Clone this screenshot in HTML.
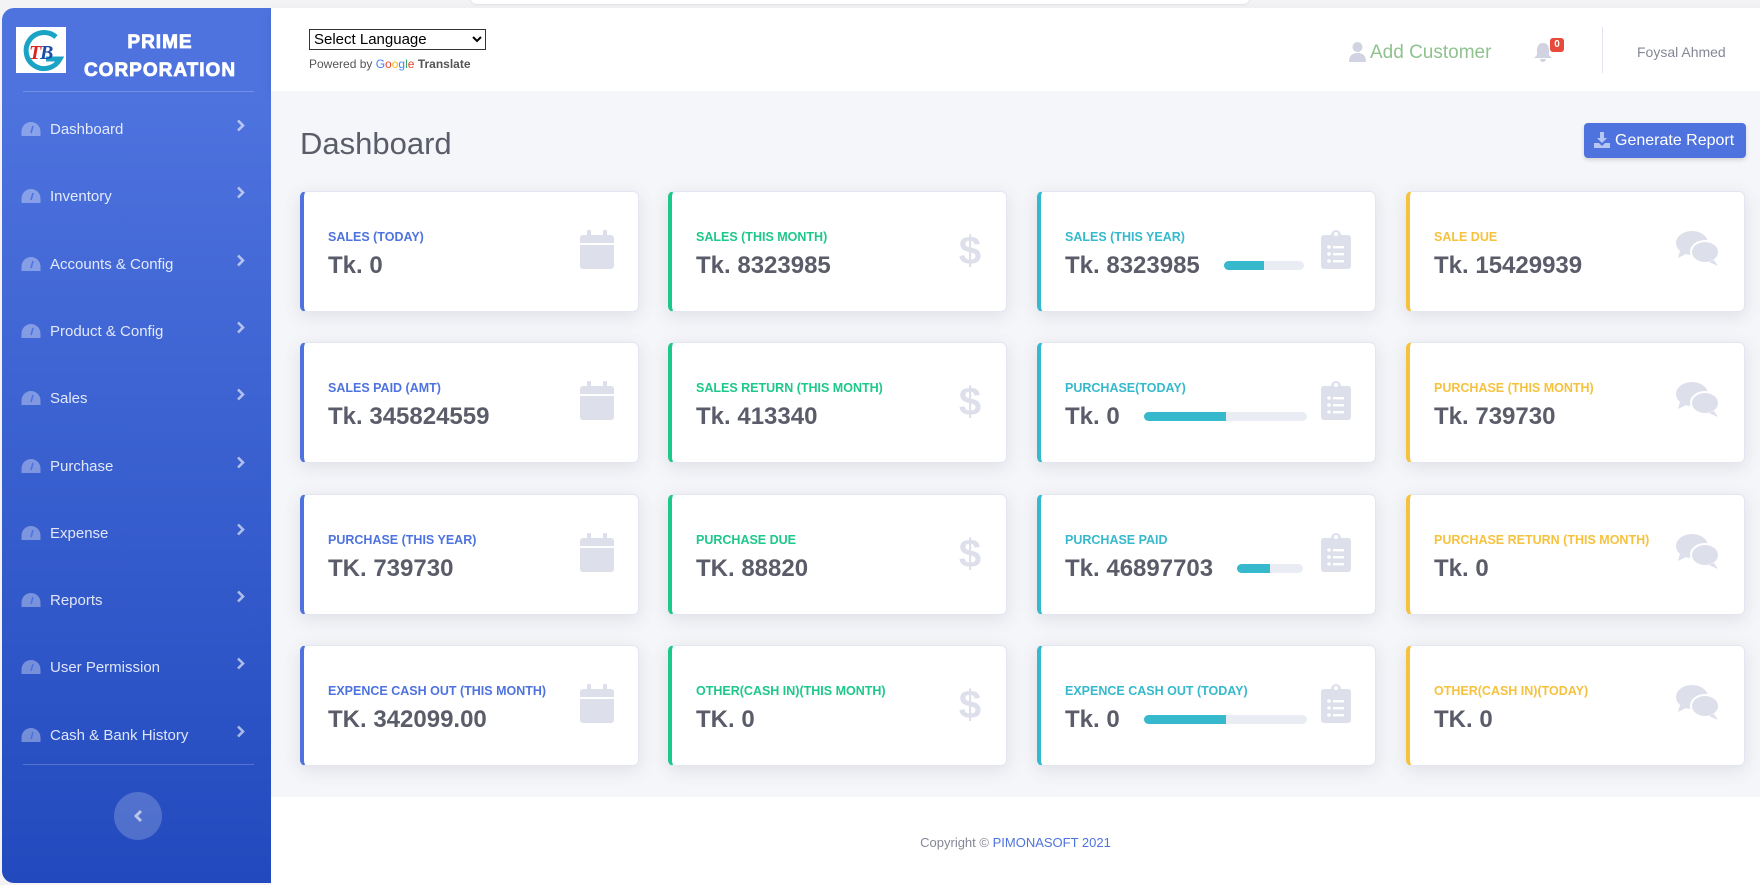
<!DOCTYPE html>
<html><head><meta charset="utf-8"><style>
*{box-sizing:border-box;margin:0;padding:0}
body{width:1760px;height:885px;overflow:hidden;background:#f3f3f5;font-family:"Liberation Sans",sans-serif;position:relative}
.topbar{position:absolute;left:470px;top:-10px;width:780px;height:14px;background:#fff;border-radius:8px;box-shadow:0 0 2px #ccc}
.side{position:absolute;left:2px;top:8px;width:269px;height:875px;background:linear-gradient(180deg,#4e73df 10%,#224abe 100%);border-radius:12px 0 0 12px}
.logo{position:absolute;left:14px;top:19px;width:50px;height:46px;background:#fff}
.brand{position:absolute;left:58px;top:21px;width:200px;text-align:center;color:#fff;font-weight:bold;font-size:19px;letter-spacing:1px;line-height:28px;-webkit-text-stroke:0.8px #fff}
.hr{position:absolute;left:21px;width:231px;height:1px;background:rgba(255,255,255,.2)}
.mi{position:absolute;left:0;width:269px;height:30px;color:rgba(255,255,255,.85);font-size:15px}
.mi svg.g{position:absolute;left:21px;top:7px}
.mi span{position:absolute;left:50px;top:7px}
.mi svg.ch{position:absolute;left:236px;top:5px}
.tog{position:absolute;left:112px;top:784px;width:48px;height:48px;border-radius:50%;background:rgba(255,255,255,.2)}
.hdr{position:absolute;left:271px;top:8px;width:1489px;height:83px;background:#fff;box-shadow:0 4px 10px rgba(58,59,69,.1)}
.main{position:absolute;left:271px;top:91px;width:1489px;height:706px;background:#f5f6fa}
.foot{position:absolute;left:271px;top:797px;width:1489px;height:88px;background:#fff;text-align:center;font-size:13px;color:#858796;padding-top:38px}
.card{position:absolute;width:339px;height:121px;background:#fff;border-radius:6px;border:1px solid #e3e6f0;box-shadow:0 4px 18px rgba(58,59,69,.12)}
.card .lab{position:absolute;left:24px;top:38px;font-size:12.5px;font-weight:bold;text-transform:uppercase}
.card .val{position:absolute;left:24px;top:60px;font-size:24px;font-weight:bold;color:#5a5c69}
.card .ic{position:absolute;right:24px;top:38px}
.bar{position:absolute;top:69px;height:9px;border-radius:5px;background:#eaecf4;overflow:hidden}
.bar i{display:block;height:100%;background:#36b9cc}
</style></head><body>
<div class="topbar"></div>
<div class="side">
 <div class="logo"><svg width="50" height="46" viewBox="0 0 50 46"><path d="M40 10 A18 18 0 1 0 44 32 L30 32" fill="none" stroke="#1ba3c6" stroke-width="5"/><text x="13" y="32" font-size="20" font-style="italic" font-weight="bold" fill="#d22" font-family="Liberation Serif,serif">T</text><text x="24" y="32" font-size="20" font-style="italic" font-weight="bold" fill="#1e4aa8" font-family="Liberation Serif,serif">B</text></svg></div>
 <div class="brand">PRIME<br>CORPORATION</div>
 <div class="hr" style="top:83px"></div>
 <div class="hr" style="top:756px"></div>
 <div class="tog"><svg style="position:absolute;left:19px;top:17px" width="10" height="14" viewBox="0 0 10 14"><path d="M8 2L3 7l5 5" fill="none" stroke="rgba(255,255,255,.6)" stroke-width="3"/></svg></div>
</div>
<div id="menu"></div>
<div class="hdr">
 <select style="position:absolute;left:38px;top:21px;width:177px;height:21px;font-size:15px;font-family:'Liberation Sans',sans-serif;border:1px solid #333;background:#fff"><option>Select Language</option></select>
 <div style="position:absolute;left:38px;top:49px;font-size:12px;color:#555">Powered by <b style="color:#4285f4;font-weight:normal">G</b><b style="color:#ea4335;font-weight:normal">o</b><b style="color:#fbbc05;font-weight:normal">o</b><b style="color:#4285f4;font-weight:normal">g</b><b style="color:#34a853;font-weight:normal">l</b><b style="color:#ea4335;font-weight:normal">e</b> <b style="color:#555">Translate</b></div>
 <svg style="position:absolute;left:1078px;top:34px" width="17" height="20" viewBox="0 0 17 20"><circle cx="8.5" cy="5" r="5" fill="#d1d3e2"/><path d="M0 20 Q0 11 8.5 11 Q17 11 17 20Z" fill="#d1d3e2"/></svg>
 <div style="position:absolute;left:1099px;top:34px;font-size:19px;color:#8fc28f">Add Customer</div>
 <svg style="position:absolute;left:1263px;top:34px" width="18" height="20" viewBox="0 0 18 20"><path d="M9 1 C4 1 3 5 3 9 L3 13 L0 16 L18 16 L15 13 L15 9 C15 5 14 1 9 1Z M6 17 a3 3 0 0 0 6 0Z" fill="#d1d3e2"/></svg>
 <div style="position:absolute;left:1279px;top:30px;width:14px;height:14px;background:#e74a3b;border-radius:3px;color:#fff;font-size:10px;font-weight:bold;text-align:center;line-height:14px">0</div>
 <div style="position:absolute;left:1331px;top:19px;width:1px;height:46px;background:#e3e6f0"></div>
 <div style="position:absolute;left:1366px;top:36px;font-size:14px;color:#858796">Foysal Ahmed</div>
</div>
<div class="main">
 <div style="position:absolute;left:29px;top:35px;font-size:31px;color:#5a5c69">Dashboard</div>
 <div style="position:absolute;left:1313px;top:32px;width:162px;height:35px;background:#4e73df;border-radius:4px;color:#fff;font-size:16px;line-height:35px;padding-left:31px;box-shadow:0 2px 4px rgba(0,0,0,.15)"><svg style="position:absolute;left:10px;top:9px" width="16" height="16" viewBox="0 0 16 16"><path d="M6 0h4v6h3l-5 5-5-5h3z M0 11h5l3 3 3-3h5v5H0z" fill="#b7c6f3"/></svg>Generate Report</div>
</div>
<div id="cards"></div>
<div class="foot">Copyright © <span style="color:#4e73df">PIMONASOFT 2021</span></div>
<script>
var m=["Dashboard","Inventory","Accounts &amp; Config","Product &amp; Config","Sales","Purchase","Expense","Reports","User Permission","Cash &amp; Bank History"],h="";
m.forEach(function(t,i){h+='<div class="mi" style="top:'+(114+i*67.3)+'px"><svg class="g" width="20" height="16" viewBox="0 0 20 16"><path d="M10 1A9.5 9.5 0 0 0 .5 10.5V15h19v-4.5A9.5 9.5 0 0 0 10 1z" fill="rgba(255,255,255,.35)"/><path d="M10 12 L12 5" stroke="#4e73df" stroke-width="1.6"/></svg><span>'+t+'</span><svg class="ch" width="9" height="13" viewBox="0 0 9 13"><path d="M2 1.5l5 5-5 5" fill="none" stroke="rgba(255,255,255,.6)" stroke-width="2.6"/></svg></div>'});
document.getElementById("menu").innerHTML=h;
var cols=[300,668,1037,1406],rows=[191,342,494,645],clr=["#4e73df","#1cc88a","#36b9cc","#f6c23e"];
var d=[["Sales (Today)","Tk. 0","Sales (This Month)","Tk. 8323985","Sales (This Year)","Tk. 8323985","Sale Due","Tk. 15429939"],
["Sales Paid (AMT)","Tk. 345824559","Sales Return (This Month)","Tk. 413340","Purchase(Today)","Tk. 0","Purchase (This Month)","Tk. 739730"],
["Purchase (This Year)","TK. 739730","Purchase Due","TK. 88820","Purchase Paid","Tk. 46897703","Purchase Return (This Month)","Tk. 0"],
["Expence Cash Out (This Month)","TK. 342099.00","Other(Cash In)(This Month)","TK. 0","Expence Cash Out (Today)","Tk. 0","Other(Cash In)(Today)","TK. 0"]];
var bars=[[183,80,40],[103,163,82],[196,66,33],[103,163,82]];
var ic=['<svg width="34" height="39" viewBox="0 0 34 39"><rect x="7" y="0" width="4" height="8" rx="1" fill="#dddfeb"/><rect x="23" y="0" width="4" height="8" rx="1" fill="#dddfeb"/><path d="M0 8a3 3 0 0 1 3-3h28a3 3 0 0 1 3 3v5H0z M0 15h34v21a3 3 0 0 1-3 3H3a3 3 0 0 1-3-3z" fill="#dddfeb"/></svg>',
'<svg width="24" height="39" viewBox="0 0 24 39"><text x="12" y="34" text-anchor="middle" font-size="40" font-weight="bold" fill="#dddfeb" font-family="Liberation Sans,sans-serif">$</text></svg>',
'<svg width="30" height="39" viewBox="0 0 30 39"><path d="M3 5h7a5 5 0 0 1 10 0h7a3 3 0 0 1 3 3v28a3 3 0 0 1-3 3H3a3 3 0 0 1-3-3V8a3 3 0 0 1 3-3z" fill="#dddfeb"/><g fill="#fff"><circle cx="8" cy="17" r="1.8"/><circle cx="8" cy="24" r="1.8"/><circle cx="8" cy="31" r="1.8"/><rect x="12" y="16" width="11" height="2.4"/><rect x="12" y="23" width="11" height="2.4"/><rect x="12" y="30" width="11" height="2.4"/></g><circle cx="15" cy="4" r="2" fill="#fff"/></svg>',
'<svg width="44" height="36" viewBox="0 0 44 36"><ellipse cx="16" cy="13" rx="16" ry="12" fill="#dddfeb"/><path d="M4 21l-2 7 8-4z" fill="#dddfeb"/><ellipse cx="29" cy="22" rx="14" ry="11" fill="#dddfeb" stroke="#fff" stroke-width="2"/><path d="M38 30l4 6-9-4z" fill="#dddfeb"/></svg>'];
var c="";
rows.forEach(function(y,r){cols.forEach(function(x,k){
c+='<div class="card" style="left:'+x+'px;top:'+y+'px;border-left:4px solid '+clr[k]+'"><div class="lab" style="color:'+clr[k]+'">'+d[r][k*2]+'</div><div class="val">'+d[r][k*2+1]+'</div><div class="ic">'+ic[k]+'</div>';
if(k==2){var b=bars[r];c+='<div class="bar" style="left:'+b[0]+'px;width:'+b[1]+'px"><i style="width:'+b[2]+'px"></i></div>';}
c+='</div>';});});
document.getElementById("cards").innerHTML=c;
</script>
</body></html>
